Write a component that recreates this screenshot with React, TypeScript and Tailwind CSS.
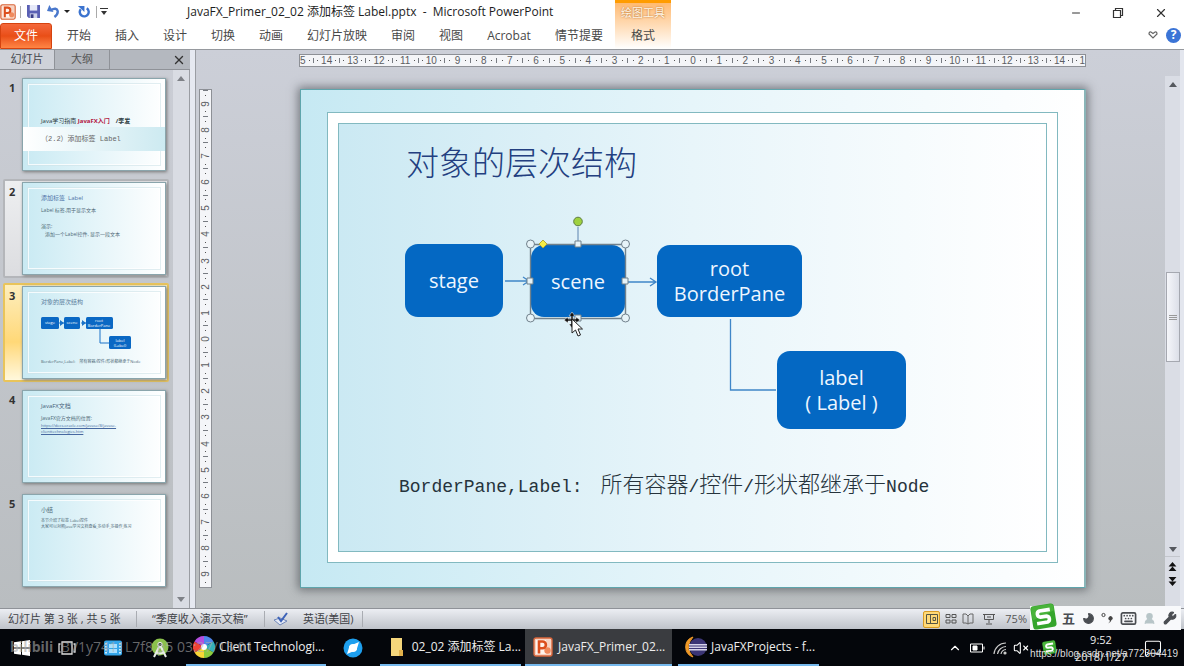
import React from "react";
import { Minus, X, ChevronUp, VolumeX, Moon, Keyboard, Wrench, UserRound, MessageSquare } from "lucide-react";

const menu = ["开始", "插入", "设计", "切换", "动画", "幻灯片放映", "审阅", "视图", "Acrobat", "情节提要"];
const hNums = Array.from({ length: 29 }, (_, i) => Math.abs(i - 14));
const vNums = Array.from({ length: 19 }, (_, i) => Math.abs(i - 9));

const Bar = () => <span className="h-[5px] w-px shrink-0 bg-[#777b82]" />;
const VBar = () => <span className="h-px w-[5px] shrink-0 bg-[#777b82]" />;
const Dot = () => <span className="size-px shrink-0 bg-[#555]" />;

function HorizontalRuler() {
  return (
    <div className="flex h-[13px] items-center overflow-hidden border border-[#8d9096] bg-[#f4f5f8] font-['Liberation_Sans',sans-serif] text-[10px] leading-none text-[#5b5d62]">
      <div className="flex grow basis-0 items-center justify-between">
        <span>5</span>
        <Dot />
        <span />
      </div>
      {hNums.map((n, i) => (
        <div key={i} className="flex grow-2 basis-0 items-center justify-between">
          <Bar />
          <Dot />
          <span>{n}</span>
          <Dot />
          <span />
        </div>
      ))}
      <div className="flex grow basis-0 items-center justify-between">
        <Bar />
        <Dot />
        <span>1</span>
      </div>
    </div>
  );
}

function VerticalRuler() {
  return (
    <div className="flex w-[13px] shrink-0 flex-col overflow-hidden border border-[#8d9096] bg-[#f4f5f8] font-['Liberation_Sans',sans-serif] text-[10px] leading-none text-[#5b5d62]">
      {vNums.map((n, i) => (
        <div key={i} className="flex grow basis-0 flex-col items-center justify-between">
          <VBar />
          <Dot />
          <span className="flex h-2 -rotate-90 items-center">{n}</span>
          <Dot />
          <span />
        </div>
      ))}
    </div>
  );
}

function PowerPointIcon({ className }: { className?: string }) {
  return (
    <svg viewBox="0 0 20 20" className={className} aria-hidden="true">
      <rect x="1" y="1" width="18" height="18" rx="2" fill="#f6d3c2" stroke="#d9653a" strokeWidth="1.4" />
      <rect x="3" y="3" width="10" height="14" fill="#fff3ec" />
      <circle cx="14.500" cy="13.500" r="3.200" fill="#f08a5c" />
      <path d="M6 16.500V4.500h3.500a3.300 3.300 0 0 1 0 6.800H6" fill="none" stroke="#dc4e1c" strokeWidth="2.6" />
    </svg>
  );
}

function SogouIcon({ className }: { className?: string }) {
  return (
    <svg viewBox="0 0 24 24" className={className} aria-hidden="true">
      <g transform="rotate(-9 12 12)">
        <rect x="1.5" y="1.5" width="21" height="21" rx="3" fill="#35a52c" />
        <path d="M2 14 22 8V5a3 3 0 0 0-3-3H5a3 3 0 0 0-3 3z" fill="#57bd45" opacity=".6" />
        <path d="M18.5 6.6H9.2a2.8 2.8 0 0 0 0 5.5h5.6a2.8 2.8 0 0 1 0 5.4H5.4" fill="none" stroke="#fff" strokeWidth="3.2" />
      </g>
    </svg>
  );
}

function TitleBar() {
  return (
    <header className="flex h-[50px] shrink-0 border-b border-[#96999e] bg-white">
      <div className="flex flex-col">
        <div className="flex h-[23px] items-center">
          <div className="flex w-[187px] items-center">
            <PowerPointIcon className="size-4" />
            <span className="ml-1 h-3 w-px bg-[#aaa]" />
            <button aria-label="保存" className="ml-[6px]">
              <svg viewBox="0 0 14 14" className="size-[13px]">
                <path d="M0 0h14v14H2l-2-2z" fill="#5a60b4" />
                <path d="M3 0h8v6H3z" fill="#e6e9f8" />
                <path d="M3 9h8v5H3z" fill="#cdd1ea" />
                <path d="M4 10h3v4H4z" fill="#383c86" />
              </svg>
            </button>
            <button aria-label="撤销" className="ml-[7px]">
              <svg viewBox="0 0 14 14" className="size-[13px]">
                <path d="M4 5.500Q10.500 2 11.500 6.500 12 10 8 13" fill="none" stroke="#4a78cc" strokeWidth="2.600" />
                <path d="M0 6.500 2.500 0 7 7.500z" fill="#4a78cc" />
              </svg>
            </button>
            <span className="ml-1 border-x-3 border-t-3 border-x-transparent border-t-[#222]" />
            <button aria-label="重复" className="ml-[7px]">
              <svg viewBox="0 0 14 14" className="size-[13px]">
                <path d="M4 4.500A4.800 4.800 0 1 0 10.500 3.500" fill="none" stroke="#3b73cf" strokeWidth="2.600" />
                <path d="M1 1h7v6.500z" fill="#3b73cf" />
              </svg>
            </button>
            <span className="ml-[6px] h-3 w-px bg-[#aaa]" />
            <svg viewBox="0 0 8 8" className="ml-[3px] size-2" aria-hidden="true"><path d="M0 0h8v1H0zM1 3h6L4 7z" fill="#333" /></svg>
          </div>
          <h1 className="text-[12px] whitespace-pre text-[#1d1d1d]">JavaFX_Primer_02_02 添加标签 Label.pptx  -  Microsoft PowerPoint</h1>
        </div>
        <nav className="flex h-[26px] items-center text-[12px] text-[#484848]">
          <button className="mr-[15px] h-full w-[52px] rounded-t-[3px] border border-[#d5430f] bg-linear-to-b from-[#f4683a] via-[#e94e16] to-[#ff8544] text-white">文件</button>
          <div className="flex gap-6">
            {menu.map((m) => <button key={m} className="whitespace-nowrap">{m}</button>)}
          </div>
        </nav>
      </div>
      <div className="ml-3 flex w-14 flex-col items-center border-t-3 border-[#ff9c00] bg-linear-to-b from-[#ffba70] via-[#ffddb8] to-white">
        <span className="flex h-5 items-center text-[11px] text-[#fff6e8] [text-shadow:0_0_2px_#a85c14]">绘图工具</span>
        <button className="flex h-[26px] items-center text-[12px] text-[#484848]">格式</button>
      </div>
      <div className="ml-auto flex flex-col items-end">
        <div className="flex h-[26px] items-center gap-[30px] pr-4 text-[#333]">
          <button aria-label="最小化"><Minus className="size-3" strokeWidth={2} /></button>
          <button aria-label="还原">
            <svg viewBox="0 0 12 12" className="size-3" fill="none" stroke="#333" strokeWidth="1.2"><path d="M1.5 3.5h7v7h-7zM3.5 3.5v-2h7v7h-2" /></svg>
          </button>
          <button aria-label="关闭"><X className="size-[14px]" strokeWidth={2} /></button>
        </div>
        <div className="flex h-[18px] items-center gap-2 pr-[3px]">
          <button aria-label="折叠功能区">
            <svg viewBox="0 0 10 10" className="size-[10px]" fill="none" stroke="#666" strokeWidth="1.2"><path d="M1 4Q1 1.500 3 2L5 3.500 7 2Q9 1.500 9 4L5 8z" /></svg>
          </button>
          <button aria-label="帮助" className="flex size-[15px] items-center justify-center rounded-full bg-[#3b74d6] text-[12px] leading-none font-bold text-white">?</button>
        </div>
      </div>
    </header>
  );
}

function Thumb({ n, state, children }: { n: number; state?: "hover" | "active"; children: React.ReactNode }) {
  const look =
    state === "active"
      ? "border-[#e9c45a] bg-linear-to-b from-[#fdeebd] via-[#ffd877] via-60% to-[#fff8dc]"
      : state === "hover"
        ? "border-[#b4b6ba] bg-linear-to-b from-[#eeeff1] to-[#dcdde0]"
        : "border-transparent";
  return (
    <li className={`flex h-[99px] rounded-[2px] border-2 ${look}`}>
      <span className="w-[17px] pt-[5px] pl-1 text-[11px] leading-none font-bold text-[#333]">{n}</span>
      <div className="my-[1px] flex h-[93px] w-36 border border-[#8aa5ac] bg-linear-to-r from-[#c9eaf3] to-white p-[5px] shadow-[1px_1px_3px_#777]">
        <div className="relative flex-1 border border-white/80 pl-3 outline outline-[#cfe3e8]/60">{children}</div>
      </div>
    </li>
  );
}

function SlidePanel() {
  return (
    <aside className="flex w-[190px] shrink-0 flex-col bg-linear-to-b from-[#cbced6] to-[#b9bdc0]">
      <div className="flex h-5 items-stretch border-b border-[#8f9298] bg-[#b4b8bf] text-[11px] text-[#44474d]">
        <button className="w-[54px] bg-[#cfd2d9]">幻灯片</button>
        <button className="w-14 border-x border-[#8f9298] text-[#555]">大纲</button>
        <button aria-label="关闭窗格" className="mr-1 ml-auto"><X className="size-[14px] text-[#333]" strokeWidth={2.4} /></button>
      </div>
      <div className="flex flex-1">
        <ol className="flex flex-1 flex-col gap-[5px] pt-[5px] pr-1 pl-[3px] text-[#4f6a78]">
          <Thumb n={1}>
            <p className="pt-[30px] text-[6px] leading-[12px] whitespace-nowrap text-[#2c3a40]">Java学习指南 <b className="text-[#b3123c]">JavaFX入门</b>　<b>/李发</b></p>
            <p className="absolute top-[42px] -left-[6px] flex h-6 w-[142px] items-center bg-linear-to-r from-white to-[#cdeaf1] pl-[18px] font-['Liberation_Mono','Noto_Sans_CJK_SC',monospace] text-[7px] text-[#666]">（2.2）添加标签 Label</p>
          </Thumb>
          <Thumb n={2} state="hover">
            <p className="pt-1 text-[6px] leading-[10px] text-[#4f73a8]">添加标签&nbsp; Label</p>
            <p className="pt-[3px] text-[5px] leading-[9px]">Label 标签,用于显示文本</p>
            <p className="pt-[7px] text-[5px] leading-[8px]">演示:</p>
            <p className="pl-1 text-[5px] leading-[9px]">添加一个Label控件, 显示一段文本</p>
          </Thumb>
          <Thumb n={3} state="active">
            <p className="pt-1 text-[6px] leading-[10px] text-[#5a7d9c]">对象的层次结构</p>
            <svg viewBox="0 0 92 34" className="mt-[9px] h-[34px] w-[92px] text-[4px]" fill="#fff" textAnchor="middle">
              <path d="M18 7h5M40 7h5M59 12v15h9" stroke="#1a73c8" fill="none" />
              <path d="m19 4 4 3-4 3zM41 4l4 3-4 3z" fill="#1a73c8" />
              <g fill="#0a68c4">
                <rect x="0" y="1" width="18" height="12" rx="1.500" />
                <rect x="23" y="1" width="16" height="12" rx="1.500" />
                <rect x="45" y="1" width="27" height="12" rx="1.500" />
                <rect x="68" y="20" width="22" height="13" rx="1.500" />
              </g>
              <text x="9" y="8">stage</text>
              <text x="31" y="8">scene</text>
              <text x="58" y="6">root</text>
              <text x="58" y="11">BorderPane</text>
              <text x="79" y="26">label</text>
              <text x="79" y="31">(Label)</text>
            </svg>
            <p className="pt-2 text-[4px] leading-[8px] whitespace-nowrap">BorderPane,Label:　所有容器/控件/形状都继承于Node</p>
          </Thumb>
          <Thumb n={4}>
            <p className="pt-1 text-[6px] leading-[10px] text-[#46617a]">JavaFX文档</p>
            <p className="pt-[3px] text-[5px] leading-[9px]">JavaFX官方文档的位置:</p>
            <p className="text-[4px] leading-[6px] whitespace-nowrap text-[#4668a0] underline">https://docs.oracle.com/javase/8/javase-<br />clienttechnologies.htm</p>
          </Thumb>
          <Thumb n={5}>
            <p className="pt-1 text-[6px] leading-[10px]">小结</p>
            <p className="pt-[3px] text-[4px] leading-[6px] whitespace-nowrap">本节介绍了标签 Label控件<br />大家可以对照Java学习文档查看,多动手,多操作,练习</p>
          </Thumb>
        </ol>
        <div className="flex w-4 flex-col items-center justify-between bg-[#d9dce3] py-1.5">
          <span className="border-x-4 border-b-5 border-x-transparent border-b-[#7e8187]" />
          <span className="border-x-4 border-t-5 border-x-transparent border-t-[#7e8187]" />
        </div>
        <div className="w-px bg-[#9a9da3]" />
      </div>
    </aside>
  );
}

const nodes = [
  { place: "left-[104px] top-[154px] w-[98px] h-[73px]", lines: ["stage"] },
  { place: "left-[230px] top-[155px] w-[94px] h-[72px]", lines: ["scene"] },
  { place: "left-[356px] top-[155px] w-[145px] h-[72px]", lines: ["root", "BorderPane"] },
  { place: "left-[476px] top-[261px] w-[129px] h-[78px]", lines: ["label", "( Label )"] },
];

const Mono = ({ children }: { children: React.ReactNode }) => (
  <span className="font-['Liberation_Mono',monospace] text-[18px]">{children}</span>
);

function Slide() {
  return (
    <article className="relative mr-[79px] ml-[88px] flex flex-1 border border-r-2 border-[#5fa5ac] border-r-[#8ab5b8] bg-linear-to-r from-[#c6e9f3] via-[#e6f5fa] to-white pt-[22px] pr-[26px] pb-6 pl-[26px] shadow-[0_0_9px_2px_rgba(60,65,70,0.6)]">
      <div className="flex flex-1 border border-[#82b9c0] bg-white p-[10px]">
        <div className="flex-1 border border-[#82b9c0] bg-linear-to-r from-[#cbe9f3] via-[#e8f5fa] to-white" />
      </div>
      <h2 className="absolute top-[49px] left-[105px] text-[33px] leading-[48px] font-light text-[#233f80]">对象的层次结构</h2>
      {nodes.map((n) => (
        <div key={n.lines[0]} className={`absolute flex flex-col items-center justify-center rounded-[13px] bg-[#0468c3] text-[20px] leading-[25px] text-[#eef6ff] ${n.place}`}>
          {n.lines.map((l) => <span key={l}>{l}</span>)}
        </div>
      ))}
      <svg className="absolute top-0 left-0 h-[400px] w-[640px]" fill="none" aria-hidden="true">
        <g stroke="#3f86c8" strokeWidth="1.3">
          <path d="M204 191h24M222 187l6 4-6 4M327 192h28M349 188l6 4-6 4" />
          <path d="M429.500 229v71H475" />
        </g>
        <g stroke="#71818c">
          <path d="M277 137v17" stroke="#5d83b0" />
          <path d="M229.500 154.500h95v74h-95z" strokeWidth="1.400" />
          <g fill="#e6f3f8">
            <circle cx="229.500" cy="154" r="4" />
            <circle cx="324.500" cy="154" r="4" />
            <circle cx="229.500" cy="228" r="4" />
            <circle cx="324.500" cy="228" r="4" />
            <path d="M274 151h6v6h-6zM226 188h6v6h-6zM321 188h6v6h-6zM274 225h6v6h-6z" />
          </g>
          <circle cx="277" cy="131.500" r="4.300" fill="#9ed13f" stroke="#5d7c42" />
          <path d="m242 150 4 4-4 4-4-4z" fill="#f7ee45" stroke="#b3a83c" />
        </g>
        <g>
          <path d="m271 222 3 4h-2v3h3v-2l4 3-4 3v-2h-3v3h2l-3 4-3-4h2v-3h-3v2l-4-3 4-3v2h3v-3h-2z" fill="#111" stroke="#fff" strokeWidth=".5" />
          <path d="M271 229v14l3.500-3 2.500 6 2.500-1-2.500-6h4.500z" fill="#fff" stroke="#222" />
        </g>
      </svg>
      <p className="absolute top-[377px] left-[98px] flex items-baseline gap-[7px] text-[22px] leading-8 font-light whitespace-nowrap text-[#26333c]">
        <Mono>BorderPane,Label:&nbsp;</Mono>
        <span>所有容器<Mono>/</Mono>控件<Mono>/</Mono>形状都继承于<Mono>Node</Mono></span>
      </p>
    </article>
  );
}

function Editor() {
  return (
    <main className="flex min-w-0 flex-1 border-l border-[#9a9da3] bg-linear-to-b from-[#cccfd8] to-[#b9bdbf]">
      <div className="flex min-w-0 flex-1 flex-col gap-[22px] pt-1 pb-5">
        <div className="pr-[79px] pl-[103px]"><HorizontalRuler /></div>
        <div className="flex flex-1 pl-[3px]">
          <VerticalRuler />
          <Slide />
        </div>
      </div>
      <div className="mt-[26px] flex w-[15px] flex-col items-center bg-[#dadde5] pt-1.5">
        <span className="border-x-4 border-b-5 border-x-transparent border-b-[#55585e]" />
        <div className="flex-1" />
        <div className="flex h-[90px] w-[14px] flex-col items-center justify-center gap-px border border-[#a5a8b0] bg-linear-to-r from-[#f5f6fa] to-[#dcdfe8]">
          <span className="h-px w-2 bg-[#999]" />
          <span className="h-px w-2 bg-[#999]" />
          <span className="h-px w-2 bg-[#999]" />
        </div>
        <div className="flex-1" />
        <span className="border-x-4 border-t-5 border-x-transparent border-t-[#55585e]" />
        <div className="mt-1 flex h-[52px] w-full flex-col items-center gap-1.5 border-t border-[#c3c6cc] pt-[5px]">
          <button aria-label="上一张幻灯片" className="flex"><svg viewBox="0 0 8 8" className="size-[9px]"><path d="m4 0 3.500 4h-7zM4 4l3.500 4h-7z" fill="#111" /></svg></button>
          <button aria-label="下一张幻灯片" className="flex"><svg viewBox="0 0 8 8" className="size-[9px]"><path d="M.5 0h7L4 4zM.5 4h7L4 8z" fill="#111" /></svg></button>
        </div>
      </div>
      <div className="w-1 bg-[#e3e6ee]" />
    </main>
  );
}

function StatusBar() {
  return (
    <footer className="relative flex h-[21px] shrink-0 items-center border-t border-[#8f9298] bg-linear-to-b from-[#eceef3] to-[#bfc3ca] text-[11px] text-[#3f4247]">
      <span className="w-[137px] border-r border-[#a9acb2] pl-2 whitespace-nowrap">幻灯片 第 3 张 , 共 5 张</span>
      <span className="w-32 border-r border-[#a9acb2] pl-[15px] whitespace-nowrap">“季度收入演示文稿”</span>
      <span className="flex w-[98px] items-center gap-[14px] border-r border-[#a9acb2] pl-2 whitespace-nowrap">
        <svg viewBox="0 0 16 14" className="h-[14px] w-4" aria-hidden="true">
          <path d="m1 8 6-2 7 3-7 4z" fill="#e4e9f5" stroke="#6f86b8" />
          <path d="m5 5 3 4 6-8" fill="none" stroke="#3c62b8" strokeWidth="2" />
        </svg>
        英语(美国)
      </span>
      <div className="mr-[157px] ml-auto flex items-center gap-[5px] text-[#555]">
        <button aria-label="普通视图" className="flex h-[17px] w-[17px] items-center justify-center rounded-[2px] border border-[#d79b25] bg-[#ffd977]">
          <svg viewBox="0 0 12 10" className="h-[10px] w-3" fill="none" stroke="#554"><path d="M.5.5h11v9H.5zM4.500.5v9M7 3.500h2.500v3H7z" /></svg>
        </button>
        <button aria-label="幻灯片浏览"><svg viewBox="0 0 12 10" className="h-[10px] w-3" fill="none" stroke="#555"><path d="M1 .5h4v3H1zM7 .5h4v3H7zM1 6h4v3H1zM7 6h4v3H7z" /></svg></button>
        <button aria-label="阅读视图"><svg viewBox="0 0 12 12" className="size-3" fill="none" stroke="#666"><path d="M6 3 4 1H1v9h3l2 1 2-1h3V1H8zv8" /></svg></button>
        <button aria-label="幻灯片放映"><svg viewBox="0 0 12 12" className="ml-1 size-3" fill="none" stroke="#555"><path d="M0 1.500h12M1.500 1.500v5h9v-5M6 6.500V10M3 11h6M4 4h4" /></svg></button>
        <span className="ml-[5px]">75%</span>
      </div>
      <div className="absolute right-[3px] -bottom-px z-10 flex h-6 w-[151px] items-center bg-[#f8f9fb] text-[#4a4d52]">
        <SogouIcon className="absolute bottom-0 left-0 size-[27px]" />
        <div className="flex flex-1 items-center justify-between pr-1 pl-8">
          <b className="text-[13px] leading-none">五</b>
          <Moon className="size-[13px] -scale-x-100 fill-current" />
          <svg viewBox="0 0 12 12" className="size-3"><circle cx="2.500" cy="3" r="1.600" fill="none" stroke="#444" /><path d="M8 5a2 2 0 1 1 2.500 3Q10 10 7 11.500 9 10 9 8.500A2 2 0 0 1 8 5z" fill="#444" /></svg>
          <Keyboard className="size-[17px]" strokeWidth={2.4} />
          <UserRound className="size-[13px] fill-[#b7c5c8] text-[#b7c5c8]" />
          <Wrench className="size-[14px] fill-current" />
        </div>
      </div>
    </footer>
  );
}

function Task({ width, active, icon, children }: { width: string; active?: boolean; icon: React.ReactNode; children: string }) {
  return (
    <button className={`flex h-full items-center gap-1 border-b-2 border-[#76b9ed] pl-[7px] text-[12px] whitespace-nowrap text-[#eee] ${width} ${active ? "bg-[#3a3c40]" : ""}`}>
      <span className="flex size-[22px] items-center justify-center">{icon}</span>
      {children}
    </button>
  );
}

function Taskbar() {
  return (
    <div className="relative flex h-[37px] shrink-0 items-center bg-[#04060b] text-white">
      <div className="flex items-center gap-[28px] pl-[14px]">
        <button aria-label="开始菜单"><svg viewBox="0 0 16 16" className="size-4" fill="#fff"><path d="M0 2.300 7 1.300v6.200H0zM8 1.200 16 0v7.500H8zM0 8.500h7v6.200l-7-1zM8 8.500h8V16l-8-1.200z" /></svg></button>
        <button aria-label="任务视图"><svg viewBox="0 0 18 14" className="h-[14px] w-[18px]" fill="none" stroke="#ddd" strokeWidth="1.300"><path d="M4 1h10v12H4zM2.500 3H1v8h1.500M15.500 3H17v8h-1.500" /></svg></button>
        <button aria-label="视频">
          <svg viewBox="0 0 18 16" className="h-4 w-[18px]"><rect width="18" height="15" y=".5" rx="2" fill="#35a6ea" /><path d="M2 3v11M16 3v11" stroke="#fff" strokeWidth="1.500" strokeDasharray="1.500 1.500" /><path d="M5 4h8v4H5zM5 9h8v4H5z" fill="#a9e0ff" /></svg>
        </button>
        <button aria-label="Android Studio">
          <svg viewBox="0 0 20 20" className="size-5"><circle cx="10" cy="9" r="8.500" fill="#8bc14c" /><path d="m4 19 6-12 6 12M6 14q4 3 8 0" fill="none" stroke="#e8ece8" strokeWidth="2" /><circle cx="10" cy="6.500" r="2.200" fill="#4a5a4a" stroke="#eee" /></svg>
        </button>
      </div>
      <div className="ml-4 flex h-full items-center">
        <Task width="w-[140px]" icon={
          <svg viewBox="0 0 22 22" className="size-[22px]">
            <path d="M11 11V0a11 11 0 0 1 9.500 5.500z" fill="#4f86ec" /><path d="m11 11 9.500-5.500a11 11 0 0 1 0 11z" fill="#35b0ba" /><path d="m11 11 9.500 5.500A11 11 0 0 1 11 22z" fill="#8ccb3e" />
            <path d="M11 11v11a11 11 0 0 1-9.500-5.500z" fill="#f8d636" /><path d="m11 11-9.500 5.500a11 11 0 0 1 0-11z" fill="#ee4335" /><path d="M11 11 1.500 5.500A11 11 0 0 1 11 0z" fill="#b44ee0" /><circle cx="11" cy="11" r="3" fill="#fff" />
          </svg>}>Client Technologi...</Task>
        <button aria-label="浏览器" className="flex w-[54px] justify-center">
          <svg viewBox="0 0 20 20" className="size-5"><circle cx="10" cy="10" r="9.500" fill="#1e9fee" /><path d="M16 4 13.500 12 4 16l2.500-8z" fill="#fff" /><circle cx="10" cy="10" r="4" fill="#fff" /></svg>
        </button>
        <Task width="w-[141px]" icon={<svg viewBox="0 0 14 18" className="h-[18px] w-[14px]"><path d="M1 0h11v14h1v4H1z" fill="#f5d67b" /><path d="M9 12h4v6H9z" fill="#e2b14b" /></svg>}>02_02 添加标签 La...</Task>
        <div className="w-1" />
        <Task width="w-[147px]" active icon={<PowerPointIcon className="size-5" />}>JavaFX_Primer_02...</Task>
        <div className="w-[6px]" />
        <Task width="w-[141px]" icon={
          <svg viewBox="0 0 22 22" className="size-[22px]"><path d="M8 1a10.500 10.500 0 0 0 0 20Q-1 11 8 1z" fill="#f19a28" stroke="#f19a28" /><circle cx="13" cy="11" r="9" fill="#3b3575" /><path d="M4 8h18v1.500H4zM4 10.500h18V12H4zM4 13h18v1.500H4z" fill="#d6d4ea" /></svg>}>JavaFXProjects - f...</Task>
      </div>
      <div className="ml-auto flex h-full items-center pr-[22px]">
        <ChevronUp className="size-[14px]" />
        <svg viewBox="0 0 15 10" className="ml-2 h-[10px] w-[15px]" fill="none" stroke="#fff"><path d="M.5 1h12v8H.5zM14 3.500v3" /><path d="M3 3h4v4H3z" fill="#fff" /></svg>
        <svg viewBox="0 0 14 14" className="ml-2 size-[14px]" fill="none" stroke="#ccc" strokeWidth="1.200"><path d="M1 13A12 12 0 0 1 13 2M4.500 13A9 9 0 0 1 13 5.500M8 13a5.500 5.500 0 0 1 5-4.500" /><circle cx="12" cy="12" r="1" fill="#fff" /></svg>
        <VolumeX className="ml-[6px] size-4" strokeWidth={1.6} />
        <SogouIcon className="ml-[13px] size-[15px]" />
        <div className="ml-4 flex w-[56px] flex-col items-center text-[11px] leading-[17px] whitespace-nowrap text-[#eee]">
          <span>9:52</span>
          <span>2018/1/27</span>
        </div>
        <MessageSquare className="ml-[15px] size-[18px]" strokeWidth={1.4} />
      </div>
      <span className="pointer-events-none absolute top-[8px] left-[10px] text-[14px] leading-5 whitespace-pre text-[#aaa]/60"><b>bilibili</b>  BV1y7411L7f8 p5 03:27/13:01</span>
      <span className="pointer-events-none absolute right-[6px] bottom-[5px] font-['Liberation_Sans',sans-serif] text-[10px] leading-[14px] text-[#ddd]">https://blog.csdn.net/a772304419</span>
    </div>
  );
}

export default function App() {
  return (
    <div className="flex h-screen min-h-[640px] flex-col overflow-hidden bg-[#c5c8cf] font-['Open_Sans','Noto_Sans_CJK_SC',sans-serif]">
      <TitleBar />
      <div className="flex min-h-0 flex-1">
        <SlidePanel />
        <div className="w-[5px] bg-[#e6e9f1]" />
        <Editor />
      </div>
      <StatusBar />
      <Taskbar />
    </div>
  );
}
